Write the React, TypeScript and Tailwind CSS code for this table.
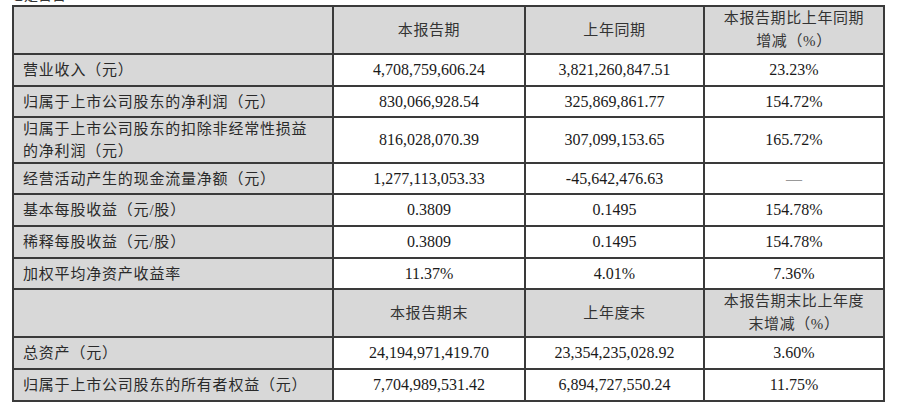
const font = { fontFamily: '"Liberation Serif", "Noto Sans CJK SC", serif' }

type Row = {
  label: string
  cells: string[]
  h: string
  head?: boolean
}

const rows: Row[] = [
  { label: '', cells: ['本报告期', '上年同期', '本报告期比上年同期\n增减（%）'], h: 'h-[44px]', head: true },
  { label: '营业收入（元）', cells: ['4,708,759,606.24', '3,821,260,847.51', '23.23%'], h: 'h-[32px]' },
  { label: '归属于上市公司股东的净利润（元）', cells: ['830,066,928.54', '325,869,861.77', '154.72%'], h: 'h-[31px]' },
  { label: '归属于上市公司股东的扣除非经常性损益\n的净利润（元）', cells: ['816,028,070.39', '307,099,153.65', '165.72%'], h: 'h-[45px]' },
  { label: '经营活动产生的现金流量净额（元）', cells: ['1,277,113,053.33', '-45,642,476.63', '—'], h: 'h-[31px]' },
  { label: '基本每股收益（元/股）', cells: ['0.3809', '0.1495', '154.78%'], h: 'h-[32px]' },
  { label: '稀释每股收益（元/股）', cells: ['0.3809', '0.1495', '154.78%'], h: 'h-[32px]' },
  { label: '加权平均净资产收益率', cells: ['11.37%', '4.01%', '7.36%'], h: 'h-[31px]' },
  { label: '', cells: ['本报告期末', '上年度末', '本报告期末比上年度\n末增减（%）'], h: 'h-[44px]', head: true },
  { label: '总资产（元）', cells: ['24,194,971,419.70', '23,354,235,028.92', '3.60%'], h: 'h-[32px]' },
  { label: '归属于上市公司股东的所有者权益（元）', cells: ['7,704,989,531.42', '6,894,727,550.24', '11.75%'], h: 'h-[32px]' },
]

const widths = ['w-[320px]', 'w-[192px]', 'w-[179px]', 'w-[180px]']

export default function App() {
  return (
    <div className="w-[900px] h-[408px] bg-white overflow-hidden relative" style={font}>
      {/* heading of the section, mostly scrolled off above */}
      <div className="absolute left-[10px] top-[-12px] text-[14px] text-[#333] leading-[15px]">七是否否</div>
      <table className="ml-[12px] mt-[5px] border-collapse table-fixed border-2 border-[#3a3a3a]">
        <tbody>
          {rows.map((r, i) => (
            <tr key={i} className={r.h}>
              <td className={`${widths[0]} bg-[#d8d8d8] border-2 border-[#3a3a3a] pl-[9px] pr-1 text-[15px] leading-[22px] tracking-[0.8px] text-[#2a2a2a] whitespace-pre-line align-middle p-0`}>
                {r.label}
              </td>
              {r.cells.map((c, j) => (
                <td
                  key={j}
                  className={`${widths[j + 1]} border-2 border-[#3a3a3a] text-center align-middle p-0 whitespace-pre-line ${
                    r.head
                      ? 'bg-[#d8d8d8] text-[15px] leading-[23px] tracking-[0.6px] text-[#333]'
                      : c === '—'
                        ? 'text-[16px] text-[#999]'
                        : 'text-[16px] leading-[20px] text-[#1a1a1a]'
                  }`}
                >
                  {c}
                </td>
              ))}
            </tr>
          ))}
        </tbody>
      </table>
    </div>
  )
}
